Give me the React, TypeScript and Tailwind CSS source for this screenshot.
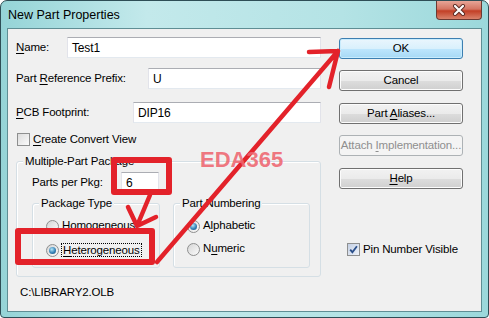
import React from "react";

const FONT = "font-['Liberation_Sans',Arial,sans-serif]";

/* underline the access-key letter */
function Key({ text, k }: { text: string; k: number }) {
  return (
    <>
      {text.slice(0, k)}
      <span className="underline underline-offset-[2px]">{text[k]}</span>
      {text.slice(k + 1)}
    </>
  );
}

function TextBox({ value, className = "" }: { value: string; className?: string }) {
  return (
    <div
      className={`h-[21px] flex items-center bg-white border border-[#e2e3ea] border-t-[#abadb3] border-b-[#e3e9ef] pl-[4px] text-[12px] ${className}`}
    >
      {value}
    </div>
  );
}

function Button({ children, kind = "normal", className = "" }: { children: React.ReactNode; kind?: "normal" | "default" | "disabled"; className?: string }) {
  const look =
    kind === "default"
      ? "border-[#3c7fb1] bg-[linear-gradient(180deg,#eaf6fd_0%,#d9f0fc_50%,#bee6fd_51%,#a7d9f5_100%)] shadow-[inset_0_0_0_1px_#c9ecfd]"
      : kind === "disabled"
      ? "border-[#adb2b5] bg-[#f4f4f4] text-[#8f8f8f]"
      : "border-[#707070] bg-[linear-gradient(180deg,#f2f2f2_0%,#ebebeb_50%,#dddddd_51%,#cfcfcf_100%)] shadow-[inset_0_0_0_1px_#fcfcfc]";
  return (
    <div className={`w-[124px] h-[21px] rounded-[3px] border flex items-center justify-center whitespace-nowrap ${look} ${className}`}>
      {children}
    </div>
  );
}

function Radio({ checked }: { checked?: boolean }) {
  return (
    <span className="w-[13px] h-[13px] shrink-0 rounded-full border border-[#8e8f8f] bg-[linear-gradient(135deg,#d6d6d6,#fbfbfb)] flex items-center justify-center">
      {checked && (
        <span className="w-[7px] h-[7px] rounded-full bg-[radial-gradient(circle_at_40%_35%,#b5e7f8_0%,#3682b8_55%,#164c74_100%)]" />
      )}
    </span>
  );
}

function Check({ checked }: { checked?: boolean }) {
  return (
    <span
      className={`w-[13px] h-[13px] shrink-0 border border-[#8e8f8f] flex items-center justify-center ${
        checked ? "bg-[linear-gradient(135deg,#c4d0e4,#eef2f9)]" : "bg-[linear-gradient(135deg,#dcdcdc,#fbfbfb)]"
      }`}
    >
      {checked && (
        <svg width="9" height="9" viewBox="0 0 9 9">
          <path d="M1.2 4.6 L3.4 7.2 L7.9 1.2" fill="none" stroke="#2b4f8a" strokeWidth="1.8" />
        </svg>
      )}
    </span>
  );
}

function GroupBox({ label, labelOffset = "ml-[7px]", className = "", children }: { label: string; labelOffset?: string; className?: string; children?: React.ReactNode }) {
  return (
    <div className={`flex flex-col border border-[#d5dfe5] rounded-[3px] shadow-[inset_1px_1px_0_#fff] ${className}`}>
      <span className={`-mt-[8px] h-[14px] leading-[14px] self-start bg-[#f0f0f0] px-[2px] whitespace-nowrap ${labelOffset}`}>{label}</span>
      {children}
    </div>
  );
}

export default function App() {
  return (
    <div className={`relative w-[489px] h-[318px] bg-white text-[11.5px] tracking-[-0.15px] text-black ${FONT}`}>
      {/* window frame */}
      <div className="w-[489px] h-[318px] flex flex-col rounded-t-[7px] rounded-b-[4px] border border-[#2e4e56] bg-[linear-gradient(90deg,#95d4d7_0%,#c3e9eb_30%,#b4e3e5_70%,#9bd8db_100%)]">
        <div className="h-[27px] flex items-start justify-between">
          <span className="pl-[7px] mt-[6px] text-[12.5px] tracking-normal leading-[16px]">New Part Properties</span>
          <div className="mr-[6px] w-[46px] h-[19px] rounded-b-[4px] border border-t-0 border-[#6b3a33] bg-[linear-gradient(180deg,#e7a597_0%,#d47563_45%,#c23f26_55%,#d9826b_100%)] flex items-center justify-center">
            <svg width="14" height="12" viewBox="0 0 14 12">
              <path d="M3 2 L11 10 M11 2 L3 10" stroke="#5a2a22" strokeWidth="4" strokeLinecap="round" />
              <path d="M3 2 L11 10 M11 2 L3 10" stroke="#ffffff" strokeWidth="2.2" strokeLinecap="round" />
            </svg>
          </div>
        </div>

        {/* client area */}
        <div className="mx-[6px] h-[284px] border border-[#5f8e94] bg-[#f0f0f0] flex flex-col">
          <div className="flex items-start">
            {/* left column */}
            <div className="ml-[8px] mt-[8px] w-[305px] flex flex-col">
              <div className="flex items-center">
                <span className="w-[51px]"><Key text="Name:" k={0} /></span>
                <TextBox value="Test1" className="flex-1" />
              </div>
              <div className="flex items-center mt-[10px]">
                <span className="w-[132px]"><Key text="Part Reference Prefix:" k={5} /></span>
                <TextBox value="U" className="flex-1" />
              </div>
              <div className="flex items-center mt-[13px]">
                <span className="w-[117px]"><Key text="PCB Footprint:" k={0} /></span>
                <TextBox value="DIP16" className="flex-1" />
              </div>
              <div className="flex items-center mt-[10px] h-[13px] ml-[1px] gap-[3px]">
                <Check />
                <span><Key text="Create Convert View" k={0} /></span>
              </div>

              <GroupBox label="Multiple-Part Package" labelOffset="ml-[6px]" className="mt-[15px] h-[116px]">
                <div className="flex items-center mt-[4px] ml-[15px]">
                  <span className="w-[89px]">Parts per Pkg:</span>
                  <TextBox value="6" className="w-[38px]" />
                </div>
                <div className="flex mt-[10px] ml-[15px] gap-[13px]">
                  <GroupBox label="Package Type" labelOffset="ml-[6px]" className="w-[128px] h-[65px]">
                    <div className="flex items-center mt-[9px] ml-[13px] gap-[3px] h-[14px]">
                      <Radio />
                      <span>Homogeneous</span>
                    </div>
                    <div className="flex items-center mt-[10px] ml-[13px] gap-[2px] h-[14px]">
                      <Radio checked />
                      <span className="border border-dotted border-black px-[1px] leading-[12px]">
                        <Key text="Heterogeneous" k={0} />
                      </span>
                    </div>
                  </GroupBox>
                  <GroupBox label="Part Numbering" labelOffset="ml-[6px]" className="w-[137px] h-[65px]">
                    <div className="flex items-center mt-[9px] ml-[13px] gap-[3px] h-[14px]">
                      <Radio checked />
                      <span><Key text="Alphabetic" k={1} /></span>
                    </div>
                    <div className="flex items-center mt-[9px] ml-[13px] gap-[3px] h-[14px]">
                      <Radio />
                      <span><Key text="Numeric" k={1} /></span>
                    </div>
                  </GroupBox>
                </div>
              </GroupBox>
            </div>

            {/* right column */}
            <div className="ml-[18px] mt-[9px] flex flex-col">
              <Button kind="default">OK</Button>
              <Button className="mt-[11px]">Cancel</Button>
              <Button className="mt-[12px]"><span>Part <Key text="Aliases..." k={0} /></span></Button>
              <Button kind="disabled" className="mt-[11px]"><span>Attach <Key text="Implementation..." k={0} /></span></Button>
              <Button className="mt-[12px]"><Key text="Help" k={0} /></Button>
              <div className="flex items-center mt-[54px] ml-[8px] gap-[3px] h-[13px]">
                <Check checked />
                <span>Pin Number Visible</span>
              </div>
            </div>
          </div>
          <div className="ml-[12px] mt-[8px] leading-[14px]">C:\LIBRARY2.OLB</div>
        </div>
      </div>

      {/* red annotations drawn over the screenshot */}
      <svg className="absolute left-0 top-0 pointer-events-none" width="489" height="318" viewBox="0 0 489 318">
        <g fill="none" stroke="#e3222a" strokeLinecap="round" strokeLinejoin="round">
          <rect x="114" y="160" width="55" height="32" strokeWidth="6" strokeLinecap="butt" />
          <rect x="18" y="231" width="134" height="31" strokeWidth="6" strokeLinecap="butt" />
          <path d="M150 195 L137 226 M128 207 L137 226 L156 217" strokeWidth="4.5" />
          <path d="M157 262 L338 51 M309 52 L338 51 L329 87" strokeWidth="4.5" />
        </g>
      </svg>
      <div className="absolute left-[200px] top-[149px] text-[22px] leading-[22px] tracking-normal font-bold text-[#ee6670]/90">EDA365</div>
    </div>
  );
}
